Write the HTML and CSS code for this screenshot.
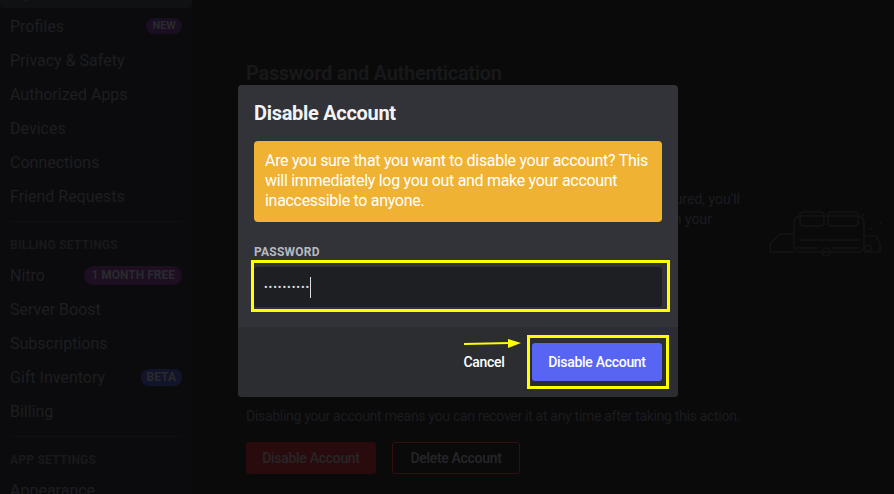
FILE: index.html
```html
<!DOCTYPE html>
<html lang="en">
<head>
    <meta charset="UTF-8">
    <meta name="viewport" content="width=device-width, initial-scale=1.0">
    <title>Disable Account</title>
    <link rel="stylesheet" href="styles.css">
</head>
<body>
    <div class="page">
        <!-- 설정 사이드바 -->
        <nav class="sidebar">
            <div class="side-item selected">My Account</div>
            <div class="side-item">Profiles <span class="badge badge-new">NEW</span></div>
            <div class="side-item">Privacy &amp; Safety</div>
            <div class="side-item">Authorized Apps</div>
            <div class="side-item">Devices</div>
            <div class="side-item">Connections</div>
            <div class="side-item">Friend Requests</div>
            <div class="side-sep"></div>
            <div class="side-head">Billing Settings</div>
            <div class="side-item">Nitro <span class="badge badge-nitro">1 MONTH FREE</span></div>
            <div class="side-item">Server Boost</div>
            <div class="side-item">Subscriptions</div>
            <div class="side-item">Gift Inventory <span class="badge badge-beta">BETA</span></div>
            <div class="side-item">Billing</div>
            <div class="side-sep"></div>
            <div class="side-head">App Settings</div>
            <div class="side-item">Appearance</div>
        </nav>

        <!-- 본문 (모달 뒤) -->
        <main class="content">
            <h2 class="content-title">Password and Authentication</h2>
            <div class="mfa-row">
                <div class="mfa-text">
                    <span class="mfa-line">an extra layer of security. Once configured, you'll</span>
                    <span class="mfa-line short">and an authentication code on your</span>
                </div>
                <svg class="mfa-art" width="124" height="52" viewBox="0 0 124 52" fill="none" stroke="#131416" stroke-width="1.5">
                    <rect x="28" y="8" width="70" height="36" rx="6"/>
                    <rect x="34" y="4" width="24" height="14" rx="3"/>
                    <rect x="62" y="4" width="30" height="14" rx="3"/>
                    <path d="M4 36 L14 26 L28 26 M4 36 L4 44 L28 44"/>
                    <path d="M98 28 L110 28 L114 36 L114 44 L98 44"/>
                    <circle cx="60" cy="44" r="4"/>
                    <circle cx="102" cy="40" r="3"/>
                    <path d="M30 40 L52 40 M66 40 L94 40 M34 32 L94 32"/>
                    <path d="M104 20 L106 22 M114 14 L116 16 M96 6 L98 8"/>
                </svg>
            </div>
            <div class="spacer"></div>
            <p class="disable-note">Disabling your account means you can recover it at any time after taking this action.</p>
            <div class="danger-row">
                <button class="btn-danger">Disable Account</button>
                <button class="btn-outline">Delete Account</button>
            </div>
        </main>
    </div>

    <!-- 모달 -->
    <div class="modal">
        <div class="modal-body">
            <h3 class="modal-title">Disable Account</h3>
            <div class="warning">Are you sure that you want to disable your account? This will immediately log you out and make your account inaccessible to anyone.</div>
            <label class="field-label">Password</label>
            <div class="input">
                <span class="dots">••••••••••</span><span class="caret"></span>
            </div>
        </div>
        <div class="modal-footer">
            <button class="btn-cancel">Cancel</button>
            <button class="btn-primary">Disable Account</button>
        </div>

        <!-- 노란 표시 (스크린샷 주석) -->
        <div class="mark mark-input"></div>
        <div class="mark mark-button"></div>
        <svg class="mark-arrow" width="62" height="14" viewBox="0 0 62 14">
            <path d="M2 7 L50 6" stroke="#ffff00" stroke-width="2"/>
            <path d="M46 2 L59 6 L46 11 Z" fill="#ffff00"/>
        </svg>
    </div>
</body>
</html>
```

FILE: styles.css
```css
*{
    box-sizing: border-box;
}
body{
    margin: 0;
    width: 894px;
    height: 494px;
    overflow: hidden;
    background-color: #0a0a0b;
    font-family: Roboto, "Noto Sans", sans-serif;
    letter-spacing: -0.3px;   /*gg sans 폭에 맞추기*/
    position: relative;
}
.page{
    display: flex;
    height: 494px;
}
/* 사이드바 */
.sidebar{
    width: 192px;
    flex-shrink: 0;
    background-color: #0b0b0d;
    margin-top: -24px;
    padding: 0 10px 0 0;
}
.side-item{
    height: 32px;
    margin-bottom: 2px;
    padding: 0 0 0 10px;
    display: flex;
    align-items: center;
    justify-content: space-between;
    font-size: 16px;
    color: #1d1e21;
    border-radius: 4px;
    letter-spacing: 0;
}
.side-item.selected{
    background-color: #101113;
    margin-right: -10px;
}
.side-sep{
    height: 1px;
    margin: 9px 0 9px 10px;
    background-color: #0f1012;
}
.side-head{
    padding: 6px 10px;
    line-height: 16px;
    font-size: 12px;
    font-weight: 700;
    text-transform: uppercase;
    color: #18191b;
    letter-spacing: 0.02em;
}
.badge{
    height: 16px;
    padding: 0 6px;
    border-radius: 8px;
    font-size: 11px;
    font-weight: 700;
    line-height: 16px;
    color: #2a2a2e;
}
.badge-new{
    background-color: #1a0f22;
}
.badge-nitro{
    height: 19px;
    line-height: 19px;
    border-radius: 10px;
    background-color: #1d0f21;
    padding: 0 7px;
    font-size: 12px;
}
.badge-beta{
    height: 17px;
    line-height: 17px;
    background-color: #12142c;
    padding: 0 6px;
    font-size: 12px;
}
/* 본문 */
.content{
    flex: 1;
    padding: 60px 0 0 54px;
}
.content-title{
    margin: 0;
    font-size: 20px;
    line-height: 26px;
    font-weight: 700;
    color: #17181a;
}
.mfa-row{
    display: flex;
    align-items: flex-start;
    margin-top: 103px;
}
.mfa-text{
    width: 494px;
    font-size: 14px;
    line-height: 20px;
    color: #1b1c1f;
    text-align: right;
    letter-spacing: 0;
}
.mfa-line{
    display: block;
    white-space: nowrap;
}
.mfa-line.short{
    padding-right: 28px;
}
.mfa-art{
    margin: 19px 0 0 26px;
}
.spacer{
    height: 146px;
}
.disable-note{
    margin: 0;
    font-size: 14px;
    line-height: 20px;
    color: #1b1c1f;
}
.danger-row{
    display: flex;
    gap: 16px;
    margin-top: 16px;
}
.btn-danger, .btn-outline{
    height: 32px;
    padding: 0;
    font-family: inherit;
    letter-spacing: inherit;
    font-size: 14px;
    font-weight: 500;
    color: #262629;
    border-radius: 3px;
    white-space: nowrap;
}
.btn-danger{
    width: 130px;
    background-color: #2a0b0d;
    border: none;
}
.btn-outline{
    width: 128px;
    background: none;
    border: 1px solid #33100f;
}
/* 모달 */
.modal{
    position: absolute;
    left: 238px;
    top: 85px;
    width: 440px;
    height: 312px;
    background-color: #313338;
    border-radius: 4px;
    overflow: hidden;
}
.modal-body{
    padding: 16px 16px 20px;
}
.modal-title{
    margin: 0;
    font-size: 20px;
    line-height: 24px;
    font-weight: 700;
    color: #f2f3f5;
}
.warning{
    margin-top: 16px;
    padding: 10px 11px 11px;
    background-color: #f0b232;
    border-radius: 4px;
    font-size: 16px;
    line-height: 20px;
    color: #ffffff;
}
.field-label{
    display: block;
    margin-top: 22px;
    font-size: 12px;
    line-height: 16px;
    font-weight: 700;
    text-transform: uppercase;
    color: #b5bac1;
    letter-spacing: 0.02em;
}
.input{
    margin-top: 7px;
    height: 40px;
    padding: 0 10px;
    background-color: #1e1f22;
    border-radius: 3px;
    display: flex;
    align-items: center;
}
.dots{
    font-size: 11px;
    color: #dbdee1;
    letter-spacing: 0.9px;
}
.caret{
    width: 1px;
    height: 21px;
    margin-left: 0;
    background-color: #dbdee1;
}
.modal-footer{
    height: 70px;
    padding: 16px;
    background-color: #2b2d31;
    display: flex;
    justify-content: flex-end;
    gap: 8px;
}
.btn-cancel{
    min-width: 80px;
    height: 38px;
    background: none;
    border: none;
    font-family: inherit;
    letter-spacing: inherit;
    font-size: 14px;
    font-weight: 500;
    color: #ffffff;
    padding-top: 1px;
}
.btn-primary{
    width: 130px;
    height: 38px;
    background-color: #5865f2;
    border: none;
    border-radius: 3px;
    font-family: inherit;
    letter-spacing: inherit;
    font-size: 14px;
    font-weight: 500;
    color: #ffffff;
}
/* 노란 주석 */
.mark{
    position: absolute;
    border: 3px solid #ffff00;
}
.mark-input{
    left: 13px;
    top: 175px;
    width: 419px;
    height: 52px;
}
.mark-button{
    left: 289px;
    top: 250px;
    width: 142px;
    height: 54px;
}
.mark-arrow{
    position: absolute;
    left: 224px;
    top: 252px;
}
```
